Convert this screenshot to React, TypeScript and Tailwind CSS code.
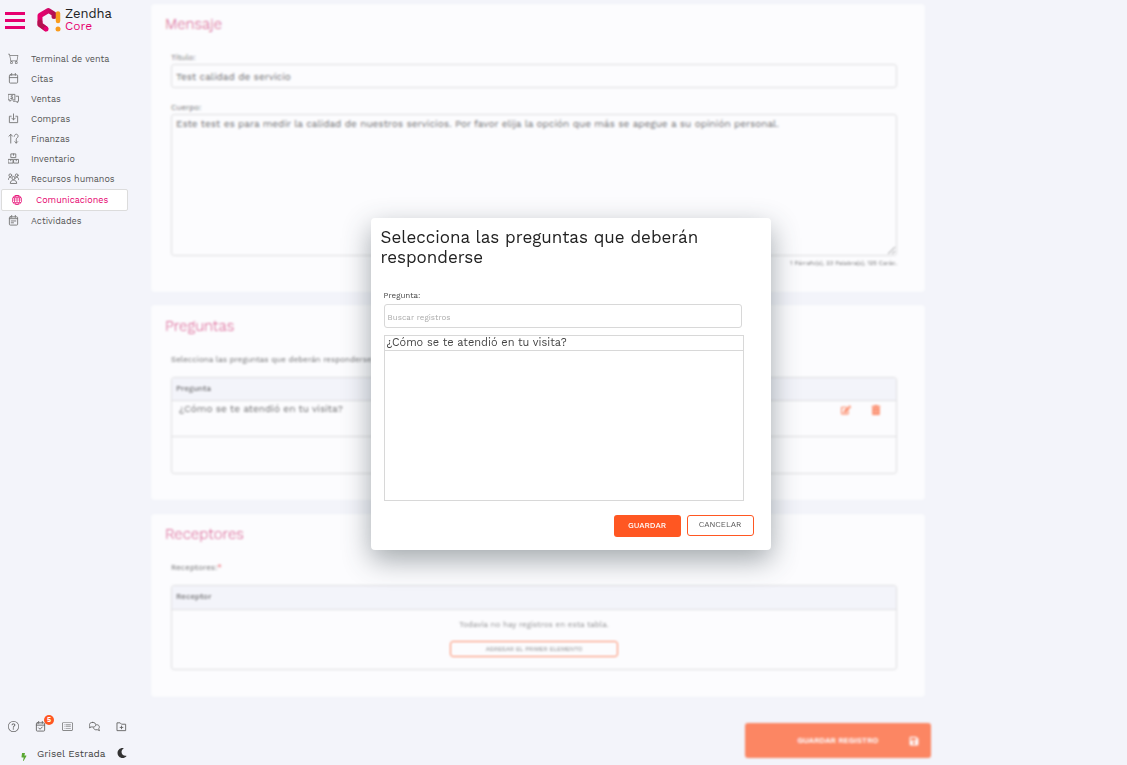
import React, { useState } from "react";
import { BsCart, BsGlobe, BsQuestionCircle, BsCardList } from "react-icons/bs";
import { FaEdit, FaSave, FaBolt, FaMoon } from "react-icons/fa";

type IconProps = { className?: string };

const strokeProps = {
  viewBox: "0 0 24 24",
  fill: "none",
  stroke: "currentColor",
  strokeWidth: 2,
  strokeLinecap: "round" as const,
  strokeLinejoin: "round" as const,
};

const Logo = () => (
  <svg viewBox="0 0 24 26" className="w-6 h-[26px]">
    <defs>
      <linearGradient id="logoPink" x1="0" y1="0" x2="1" y2="0">
        <stop offset="0" stopColor="#e6006e" />
        <stop offset="0.55" stopColor="#d4086a" />
        <stop offset="1" stopColor="#b0104f" />
      </linearGradient>
    </defs>
    <path
      d="M17 9.500V7L11.500 3.500 3 8.500V17.500L8.500 21.500"
      fill="none"
      stroke="url(#logoPink)"
      strokeWidth="5"
      strokeLinejoin="round"
      strokeLinecap="round"
    />
    <path d="M3 15v2.500l5.500 4" fill="none" stroke="#b4124f" strokeWidth="5" strokeLinejoin="round" strokeLinecap="round" />
    <circle cx="9" cy="22" r="2.500" fill="#e6006e" />
    <path d="M21 6.500V14" stroke="#f99b1c" strokeWidth="4.500" strokeLinecap="round" />
    <circle cx="21" cy="22" r="2.500" fill="#f99b1c" />
  </svg>
);

const CalendarIcon = ({ className }: IconProps) => (
  <svg {...strokeProps} className={className}>
    <rect x="3" y="4" width="18" height="18" rx="2" />
    <path d="M3 10h18M8 1v4M16 1v4" />
  </svg>
);

const CalendarCheckIcon = ({ className }: IconProps) => (
  <svg {...strokeProps} className={className}>
    <rect x="3" y="4" width="18" height="18" rx="2" />
    <path d="M3 9h18M8 1v4M16 1v4M8 15l3 3 5-5" />
  </svg>
);

const AgendaIcon = ({ className }: IconProps) => (
  <svg {...strokeProps} className={className}>
    <rect x="3" y="4" width="18" height="18" rx="2" />
    <path d="M3 8h18M8 1v4M16 1v4M7 13h10M7 17h5" />
  </svg>
);

const SalesIcon = ({ className }: IconProps) => (
  <svg {...strokeProps} className={className}>
    <path d="M1 3h14v12H8l-4 3v-3H1z" />
    <path d="M18 7h5v11h-2v3l-4-3h-5" />
    <path d="M10 6H7v3h3v3H6" />
  </svg>
);

const InboxIcon = ({ className }: IconProps) => (
  <svg {...strokeProps} className={className}>
    <path d="M7 7H3v14h18V7h-4" />
    <path d="M12 2v13M8 11l4 4 4-4" />
  </svg>
);

const FinanceIcon = ({ className }: IconProps) => (
  <svg {...strokeProps} className={className}>
    <path d="M6 22V3M2 7l4-4 4 4" />
    <path d="M14 7c0-6 8-6 8 0 0 4-4 3-4 7v8M15 19l3 3 3-3" />
  </svg>
);

const BoxesIcon = ({ className }: IconProps) => (
  <svg {...strokeProps} className={className}>
    <path d="M7 2h10v8H7zM1 14h10v8H1zM13 14h10v8H13z" />
    <path d="M12 2v3M6 14v3M18 14v3" />
  </svg>
);

const PeopleIcon = ({ className }: IconProps) => (
  <svg {...strokeProps} className={className}>
    <circle cx="5" cy="5" r="3" />
    <circle cx="19" cy="5" r="3" />
    <circle cx="12" cy="11" r="3.500" />
    <path d="M1 14c0-4 2-5 5-5M23 14c0-4-2-5-5-5M5 22c0-9 14-9 14 0z" />
  </svg>
);

const ChatsIcon = ({ className }: IconProps) => (
  <svg {...strokeProps} className={className}>
    <path d="M8 3c-8 0-8 6-6 8l-1 4 4-2c13 2 13-10 3-10z" />
    <path d="M17 8c6 0 7 6 4 9l2 4-5-2c-5 1-8-1-8-4" />
  </svg>
);

const FolderIcon = ({ className }: IconProps) => (
  <svg {...strokeProps} className={className}>
    <path d="M3 4h6l3 3h9v14H3z" />
    <path d="M12 11v6M9 14h6" />
  </svg>
);

const TrashIcon = ({ className }: IconProps) => (
  <svg viewBox="0 0 24 24" fill="currentColor" className={className}>
    <path d="M2 2h6l1-2h6l1 2h6v4H2z" />
    <path
      fillRule="evenodd"
      d="M3 7h18v15a2 2 0 0 1-2 2H5a2 2 0 0 1-2-2zM7 10v11h1V10zM11.500 10v11h1V10zM16 10v11h1V10z"
    />
  </svg>
);

const menu = [
  { label: "Terminal de venta", Icon: BsCart },
  { label: "Citas", Icon: CalendarIcon },
  { label: "Ventas", Icon: SalesIcon },
  { label: "Compras", Icon: InboxIcon },
  { label: "Finanzas", Icon: FinanceIcon },
  { label: "Inventario", Icon: BoxesIcon },
  { label: "Recursos humanos", Icon: PeopleIcon },
  { label: "Comunicaciones", Icon: BsGlobe, active: true },
  { label: "Actividades", Icon: AgendaIcon },
];

const shortcuts = [
  { label: "Ayuda", Icon: BsQuestionCircle },
  { label: "Pendientes", Icon: CalendarCheckIcon, badge: 5 },
  { label: "Registros", Icon: BsCardList },
  { label: "Chat", Icon: ChatsIcon },
  { label: "Archivos", Icon: FolderIcon },
];

const Sidebar = () => (
  <aside className="flex w-[151px] shrink-0 flex-col text-[#555]">
    <div className="flex items-center gap-3 pl-[5px] pt-[7px]">
      <button aria-label="Menú" className="flex w-5 flex-col gap-1">
        <span className="h-[3px] bg-[#e6006e]" />
        <span className="h-[3px] bg-[#e6006e]" />
        <span className="h-[3px] bg-[#e6006e]" />
      </button>
      <div className="flex items-center gap-1">
        <Logo />
        <div className="text-[13px] leading-[13px]">
          <p className="text-[#222]">Zendha</p>
          <p className="text-xs leading-[13px] text-[#e6006e]">Core</p>
        </div>
      </div>
    </div>
    <nav className="mt-4 text-[9px]">
      {menu.map(({ label, Icon, active }) =>
        active ? (
          <a
            key={label}
            href="#"
            className="ml-px mr-[23px] flex h-[22px] items-center gap-3 rounded-xs border border-[#dcdcdc] bg-white pl-[10px] text-[#e6006e]"
          >
            <Icon className="size-[10px]" />
            <span className="pl-[2px] pt-px">{label}</span>
          </a>
        ) : (
          <a key={label} href="#" className="flex h-5 items-center gap-3 pl-2">
            <Icon className="mb-px size-[11px] text-[#777]" />
            <span className="pt-px">{label}</span>
          </a>
        ),
      )}
    </nav>
    <div className="mt-auto flex gap-4 pl-2 text-[#666]">
      {shortcuts.map(({ label, Icon, badge }) => (
        <button key={label} aria-label={label} className="relative">
          <Icon className="size-[11px]" />
          {badge && (
            <span className="absolute -right-2 -top-1.5 flex size-[10px] items-center justify-center rounded-full bg-[#ff5722] text-[7px] font-bold text-white">
              {badge}
            </span>
          )}
        </button>
      ))}
    </div>
    <div className="mt-[13px] flex items-center gap-2 pb-1 pl-5 text-[10px] text-[#444]">
      <FaBolt className="mt-2 size-2 text-[#5aa832]" />
      <span className="pl-px">Grisel Estrada</span>
      <FaMoon className="ml-[3px] size-[10px] text-[#333]" />
    </div>
  </aside>
);

type CardProps = { title: string; className: string; children: React.ReactNode };

const Card = ({ title, className, children }: CardProps) => (
  <section className={`rounded-sm bg-white pl-5 pr-7 ${className}`}>
    <h2 className="-ml-1.5 text-[15px] font-light leading-5 text-[#c8004f]">{title}</h2>
    {children}
  </section>
);

const MessageCard = () => (
  <Card title="Mensaje" className="h-[288px] pt-[10px]">
    <label htmlFor="titulo" className="mt-[18px] block text-[8px] leading-3">
      Título:
    </label>
    <input
      id="titulo"
      defaultValue="Test calidad de servicio"
      className="block h-6 w-full rounded-[3px] border border-[#d5d5d5] px-1 text-[10px]"
    />
    <label htmlFor="cuerpo" className="mt-[14px] block text-[8px] leading-3">
      Cuerpo:
    </label>
    <textarea
      id="cuerpo"
      defaultValue="Este test es para medir la calidad de nuestros servicios. Por favor elija la opción que más se apegue a su opinión personal."
      className="block h-[142px] w-full rounded-[3px] border border-[#d5d5d5] px-1 py-[3px] text-[10px] leading-3"
    />
    <p className="mt-[3px] text-right text-[6px] leading-2">1 Párrafo(s), 23 Palabra(s), 125 Carác.</p>
  </Card>
);

const QuestionsCard = () => (
  <Card title="Preguntas" className="mt-[13px] h-[195px] pt-[11px]">
    <p className="mt-[18px] text-[8px] leading-3">Selecciona las preguntas que deberán responderse:</p>
    <div className="mt-[11px] overflow-hidden rounded-[3px] border border-[#d5d5d5]">
      <table className="w-full text-left">
        <thead className="bg-[#f3f4fa]">
          <tr className="h-[22px] border-b border-[#d5d5d5] text-[8px]">
            <th className="px-1 font-medium">Pregunta</th>
            <th className="w-[55px]" />
          </tr>
        </thead>
        <tbody>
          <tr className="h-9 border-b border-[#d5d5d5] align-top text-[10px]">
            <td className="px-[7px] pt-[2px] leading-3">¿Cómo se te atendió en tu visita?</td>
            <td className="pt-1">
              <div className="flex gap-5 text-[#ff5722]">
                <button aria-label="Editar">
                  <FaEdit className="size-[10px]" />
                </button>
                <button aria-label="Eliminar">
                  <TrashIcon className="size-[10px]" />
                </button>
              </div>
            </td>
          </tr>
          <tr className="h-[37px]">
            <td colSpan={2} />
          </tr>
        </tbody>
      </table>
    </div>
  </Card>
);

const ReceiversCard = () => (
  <Card title="Receptores" className="mt-[14px] h-[183px] pt-[10px]">
    <p className="mt-[18px] text-[8px] leading-3">
      Receptores:<span className="text-red-600">*</span>
    </p>
    <div className="mt-[11px] overflow-hidden rounded-[3px] border border-[#d5d5d5]">
      <table className="w-full text-left">
        <thead className="bg-[#f3f4fa]">
          <tr className="h-[23px] border-b border-[#d5d5d5] text-[8px]">
            <th className="px-1 font-medium">Receptor</th>
          </tr>
        </thead>
        <tbody>
          <tr className="h-[60px]">
            <td className="pb-[2px] text-center">
              <p className="text-[8px] leading-3 text-[#666]">Todavía no hay registros en esta tabla.</p>
              <button className="mt-[10px] h-4 w-[168px] rounded-[3px] border border-[#ff5722] text-[6px] text-[#555]">
                AGREGAR EL PRIMER ELEMENTO
              </button>
            </td>
          </tr>
        </tbody>
      </table>
    </div>
  </Card>
);

const QuestionsModal = ({ onClose }: { onClose: () => void }) => (
  <div className="fixed inset-0 flex items-center justify-center pl-[14px] pt-[3px]">
    <div
      role="dialog"
      aria-labelledby="modal-title"
      className="w-[400px] rounded-sm bg-white pb-[13px] pt-[9px] text-[#444] shadow-[0_10px_28px_rgba(50,65,70,0.45)]"
    >
      <h1 id="modal-title" className="px-[10px] text-[17px] leading-5 text-[#222]">
        Selecciona las preguntas que deberán responderse
      </h1>
      <div className="mt-[23px] pl-[13px] pr-[27px]">
        <label htmlFor="pregunta" className="block text-[8px] leading-3">
          Pregunta:
        </label>
        <div className="mt-[2px] pr-[2px]">
          <input
            id="pregunta"
            placeholder="Buscar registros"
            className="block h-6 w-full rounded-[3px] border border-[#d8d8d8] px-[3px] pt-[2px] text-[8px] placeholder:text-[#aaa]"
          />
        </div>
        <ul className="mt-[7px] h-[166px] border border-[#d8d8d8]">
          <li className="border-b border-[#d8d8d8] px-[2px] text-[11px] leading-[14px]">
            ¿Cómo se te atendió en tu visita?
          </li>
        </ul>
      </div>
      <div className="mt-[14px] flex items-start justify-end gap-[6px] pr-[17px] text-[8px]">
        <button className="h-[22px] w-[67px] rounded-[3px] bg-[#ff5722] font-medium text-white">GUARDAR</button>
        <button onClick={onClose} className="h-[21px] w-[67px] rounded-[3px] border border-[#ff5722] pb-px text-[#555]">
          CANCELAR
        </button>
      </div>
    </div>
  </div>
);

const App = () => {
  const [open, setOpen] = useState(true);

  return (
    <div className="flex min-h-screen bg-[#f3f4fa] font-['Work_Sans','Inter',sans-serif]">
      <Sidebar />
      <main
        className={`flex w-full max-w-[774px] flex-col pb-[7px] pt-1 text-[#333] ${open ? "opacity-70 blur-[1px]" : ""}`}
      >
        <MessageCard />
        <QuestionsCard />
        <ReceiversCard />
        <button className="-mr-1.5 mt-auto flex h-[35px] w-[186px] items-center self-end rounded-[3px] bg-[#ff5722] px-3 text-[8px] font-semibold text-white">
          <span className="grow pl-[10px]">GUARDAR REGISTRO</span>
          <FaSave className="size-[10px]" />
        </button>
      </main>
      {open && <QuestionsModal onClose={() => setOpen(false)} />}
    </div>
  );
};

export default App;
